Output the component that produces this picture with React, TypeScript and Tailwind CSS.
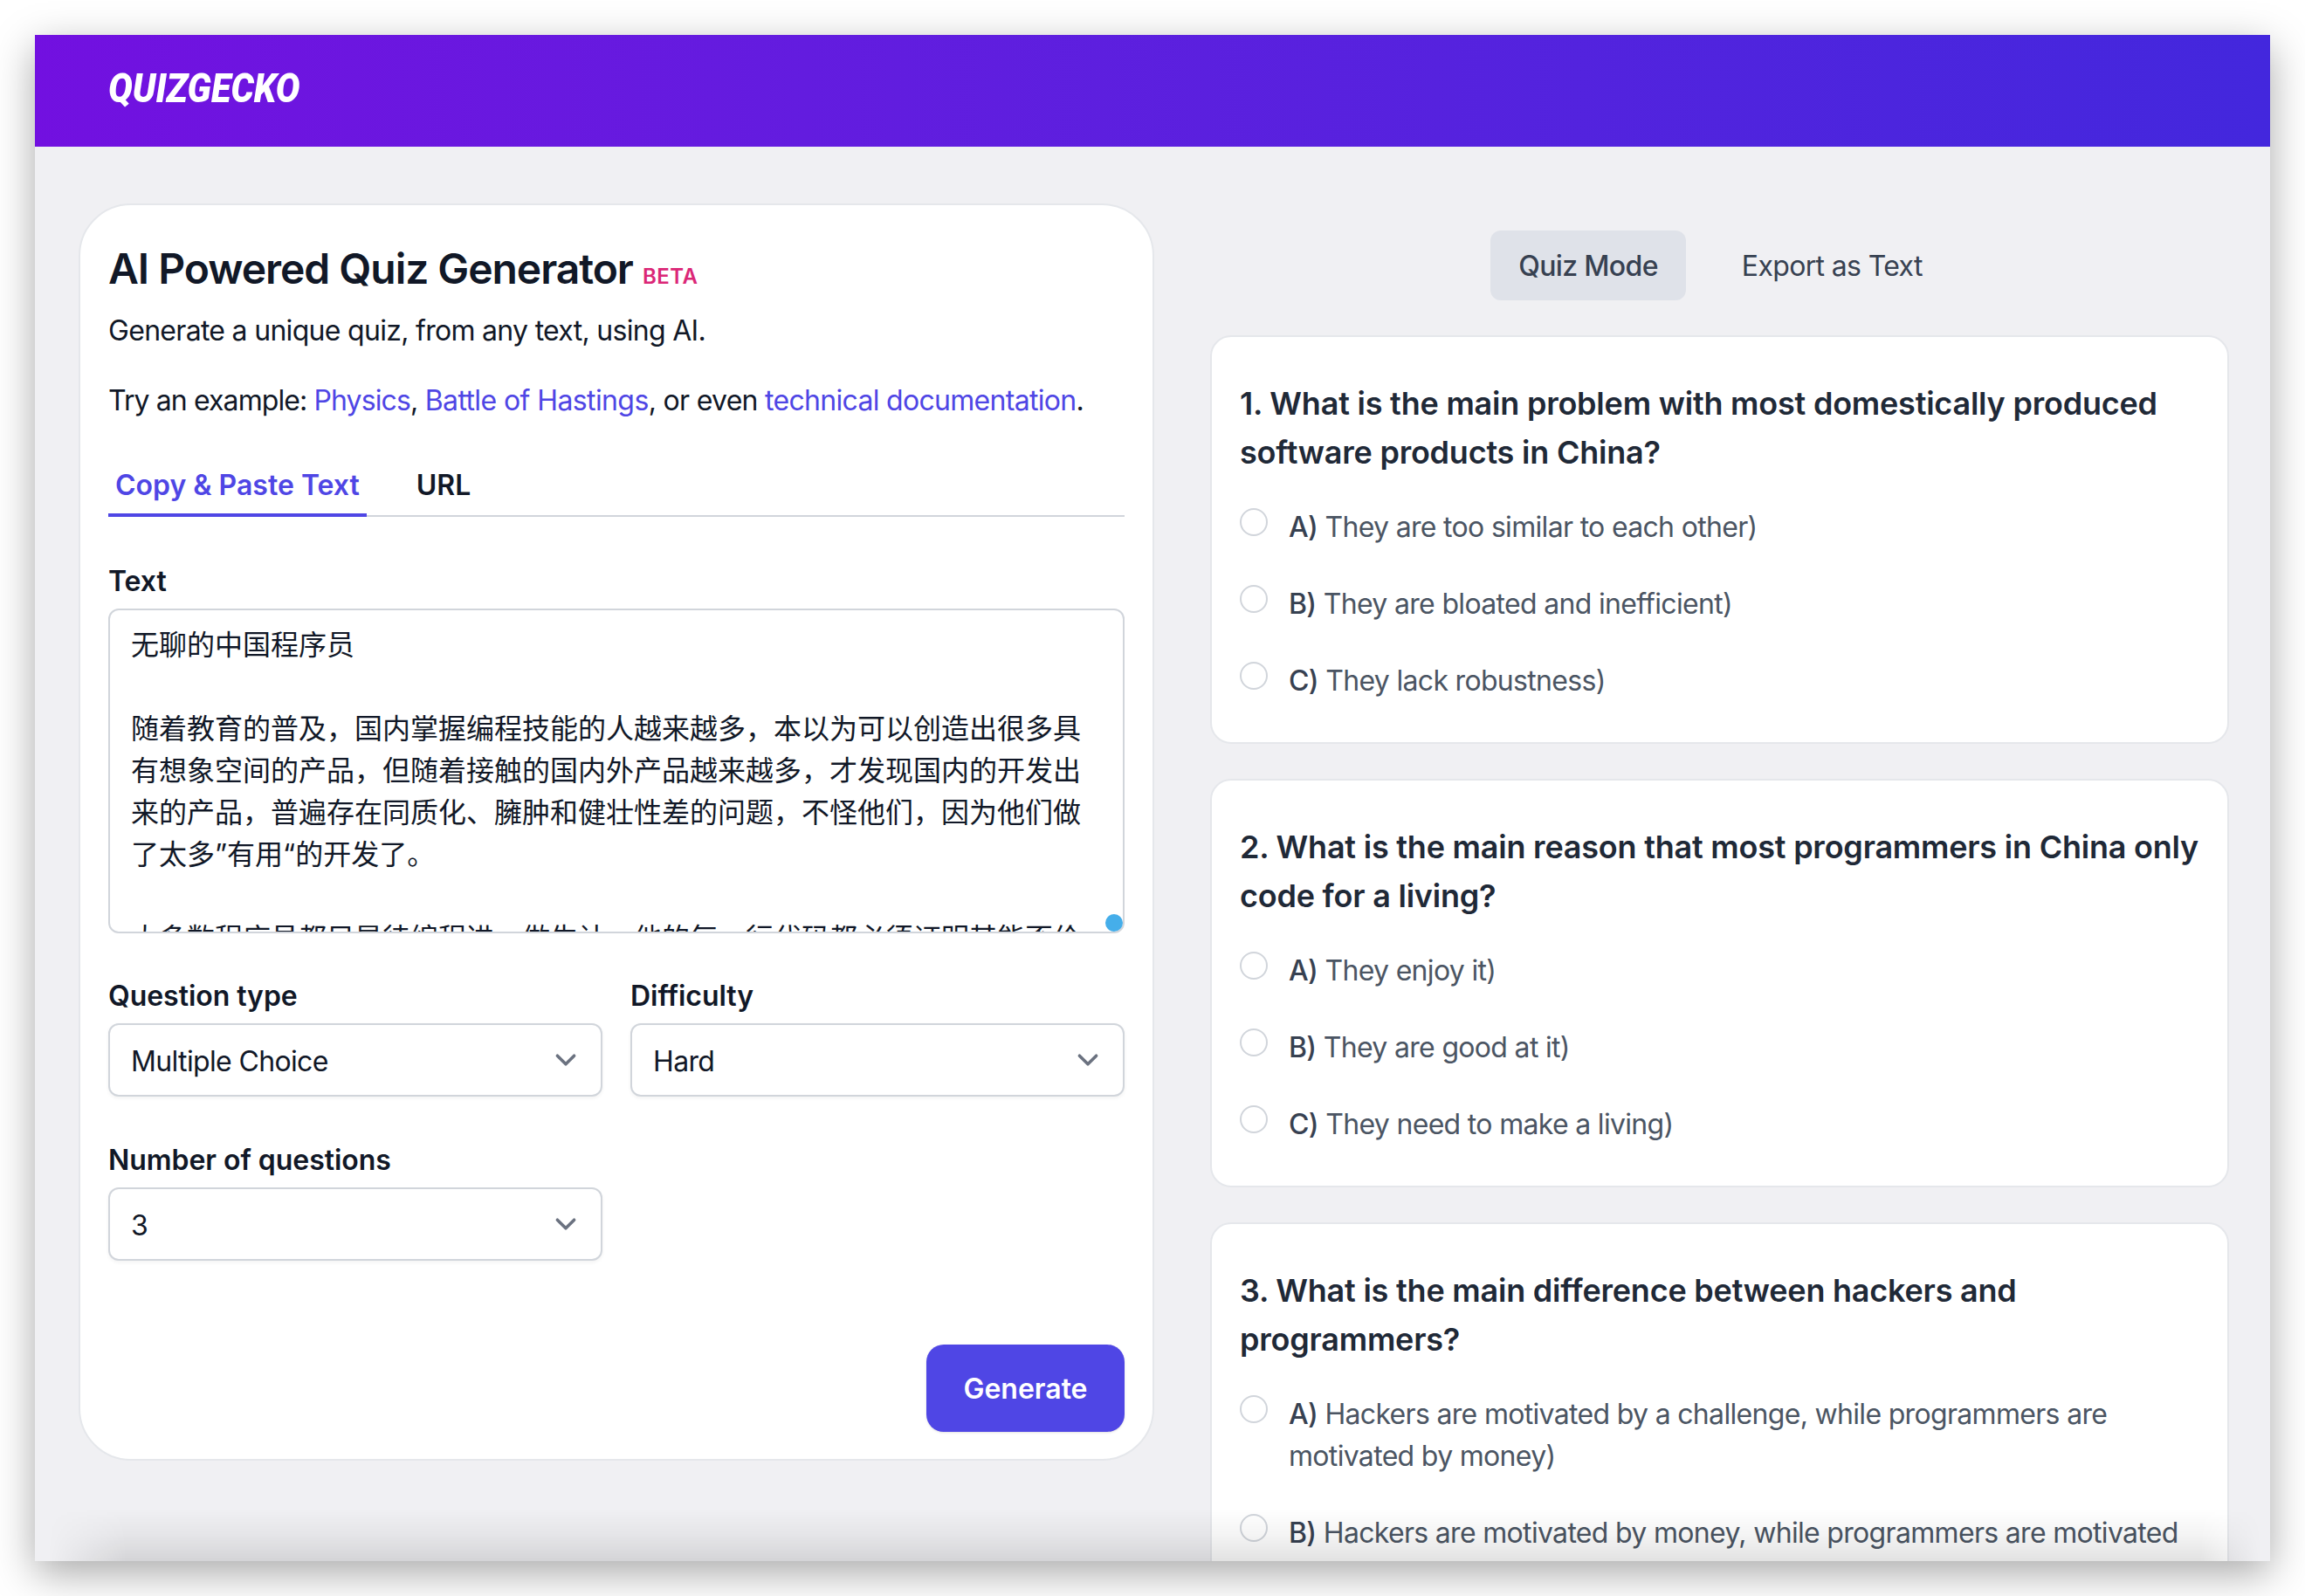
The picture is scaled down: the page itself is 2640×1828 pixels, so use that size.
import React from "react";

function Chevron() {
  return (
    <svg viewBox="0 0 20 20" fill="none" className="w-12 h-12 shrink-0 text-[#6b7280]">
      <path d="m6 8 4 4 4-4" stroke="currentColor" strokeWidth="1.5" strokeLinecap="round" strokeLinejoin="round" />
    </svg>
  );
}

function Select({ value }: { value: string }) {
  return (
    <div className="flex items-center justify-between h-[84px] border-2 border-[#d1d5db] rounded-xl bg-white pl-6 pr-4 shadow-[0_2px_4px_rgba(0,0,0,0.05)] text-[32px] leading-[48px] tracking-[-0.65px] text-[#111827]">
      <span className="pt-1">{value}</span>
      <Chevron />
    </div>
  );
}

function Label({ children }: { children: React.ReactNode }) {
  return <div className="text-[32px] leading-[40px] font-semibold tracking-[-0.05px] text-[#111827] mb-[11px]">{children}</div>;
}

function Option({ letter, text }: { letter: string; text: string }) {
  return (
    <div className="flex gap-6">
      <span className="w-8 h-8 shrink-0 rounded-full border-2 border-[#d1d5db] bg-white mt-0.5" />
      <p className="text-[32px] leading-[48px] tracking-[-0.68px] text-[#4b5563]">
        <span className="font-medium text-[#374151]">{letter}</span> {text}
      </p>
    </div>
  );
}

function Question({ title, options }: { title: string; options: [string, string][] }) {
  return (
    <div className="bg-white border-2 border-[#e5e7eb] rounded-3xl pl-8 pr-6 pt-12 pb-[46px]">
      <h3 className="text-[36px] leading-[56px] font-semibold text-[#1f2937] tracking-[-0.22px]">{title}</h3>
      <div className="mt-[34px] flex flex-col gap-10">
        {options.map(([l, t]) => (
          <Option key={l} letter={l} text={t} />
        ))}
      </div>
    </div>
  );
}

export default function App() {
  return (
    <div className="h-[1828px] overflow-hidden bg-white p-10 font-['Inter','Noto_Sans_CJK_SC',sans-serif]">
      <div className="relative w-[2560px] h-[1748px] overflow-hidden bg-[#f0f0f3] shadow-[0_14px_44px_rgba(0,0,0,0.34)]">
        <header className="h-32 flex items-center pl-[84px] pb-[6px] bg-gradient-to-r from-[#7210e0] to-[#4327dd]">
          <span className="text-white font-['Roboto',sans-serif] font-black italic text-[46px] leading-none origin-left scale-x-[0.9]">
            QUIZGECKO
          </span>
        </header>

        <main className="flex items-start pl-[50px] pt-[65px] gap-[64px]">
          <section className="w-[1232px] h-[1440px] shrink-0 flex flex-col bg-white border-2 border-[#e5e7eb] rounded-[60px] px-8 pt-[41px] pb-[31px]">
            <h1 className="text-[48px] leading-[64px] font-semibold text-[#111827] tracking-[-1.05px]">
              AI Powered Quiz Generator{" "}
              <span className="text-[24px] leading-none font-semibold text-[#db2777] tracking-[0.5px]">BETA</span>
            </h1>
            <p className="mt-[15px] text-[32px] leading-[48px] tracking-[-0.7px] text-[#111827]">
              Generate a unique quiz, from any text, using AI.
            </p>
            <p className="mt-8 text-[32px] leading-[48px] tracking-[-0.7px] text-[#111827]">
              <span className="tracking-[-0.9px]">Try an example: </span>
              <a className="text-[#4f46e5] tracking-[-0.9px]">Physics</a>, <a className="text-[#4f46e5] tracking-[-0.6px]">Battle of Hastings</a>, or even{" "}
              <a className="text-[#4f46e5]">technical documentation</a>.
            </p>

            <div className="mt-[49px] flex gap-[49px] border-b-2 border-[#d1d5db] text-[32px] leading-[48px] font-semibold">
              <div className="px-2 pb-2 -mb-0.5 border-b-4 border-[#4f46e5] text-[#4f46e5]">Copy &amp; Paste Text</div>
              <div className="px-2 text-[#111827]">URL</div>
            </div>

            <div className="mt-[54px]">
              <Label>Text</Label>
              <div className="relative h-[372px] border-2 border-[#d1d5db] rounded-xl bg-white">
                <div className="h-full overflow-hidden px-6 pt-4 text-[32px] leading-[48px] text-[#111827] whitespace-pre-wrap">
                  {"无聊的中国程序员\n\n随着教育的普及，国内掌握编程技能的人越来越多，本以为可以创造出很多具有想象空间的产品，但随着接触的国内外产品越来越多，才发现国内的开发出来的产品，普遍存在同质化、臃肿和健壮性差的问题，不怪他们，因为他们做了太多”有用“的开发了。\n\n大多数程序员都只是待编程进，做生计，他的每一行代码都必须证明其能否价值"}
                </div>
                <span className="absolute right-0 bottom-0 w-5 h-5 rounded-full bg-[#45aeea]" />
              </div>
            </div>

            <div className="mt-[52px] grid grid-cols-2 gap-x-8 gap-y-[53px]">
              <div>
                <Label>Question type</Label>
                <Select value="Multiple Choice" />
              </div>
              <div>
                <Label>Difficulty</Label>
                <Select value="Hard" />
              </div>
              <div>
                <Label>Number of questions</Label>
                <Select value="3" />
              </div>
            </div>

            <div className="mt-auto flex justify-end">
              <button className="w-[227px] h-[100px] pt-0.5 rounded-[20px] bg-[#4f46e5] text-white text-[32px] font-semibold shadow-sm">
                Generate
              </button>
            </div>
          </section>

          <section className="w-[1167px] shrink-0">
            <div className="flex justify-center gap-8 mt-[31px] mb-10 pl-0.5 text-[32px] leading-[48px] tracking-[-0.65px]">
              <div className="h-20 px-8 pt-0.5 flex items-center rounded-xl bg-[#dfe2e9] font-medium text-[#374151]">Quiz Mode</div>
              <div className="h-20 px-8 pt-0.5 flex items-center text-[#374151]">Export as Text</div>
            </div>
            <div className="flex flex-col gap-10">
              <Question
                title="1. What is the main problem with most domestically produced software products in China?"
                options={[
                  ["A)", "They are too similar to each other)"],
                  ["B)", "They are bloated and inefficient)"],
                  ["C)", "They lack robustness)"],
                ]}
              />
              <Question
                title="2. What is the main reason that most programmers in China only code for a living?"
                options={[
                  ["A)", "They enjoy it)"],
                  ["B)", "They are good at it)"],
                  ["C)", "They need to make a living)"],
                ]}
              />
              <Question
                title="3. What is the main difference between hackers and programmers?"
                options={[
                  ["A)", "Hackers are motivated by a challenge, while programmers are motivated by money)"],
                  ["B)", "Hackers are motivated by money, while programmers are motivated by a challenge)"],
                ]}
              />
            </div>
          </section>
        </main>

        <div className="absolute inset-x-0 bottom-0 h-[60px] bg-gradient-to-b from-transparent via-[rgba(0,0,0,0.045)] via-50% to-[rgba(0,0,0,0.115)] [mask-image:linear-gradient(to_right,transparent_15px,black_105px,black_2480px,transparent_2550px)]" />
      </div>
    </div>
  );
}
